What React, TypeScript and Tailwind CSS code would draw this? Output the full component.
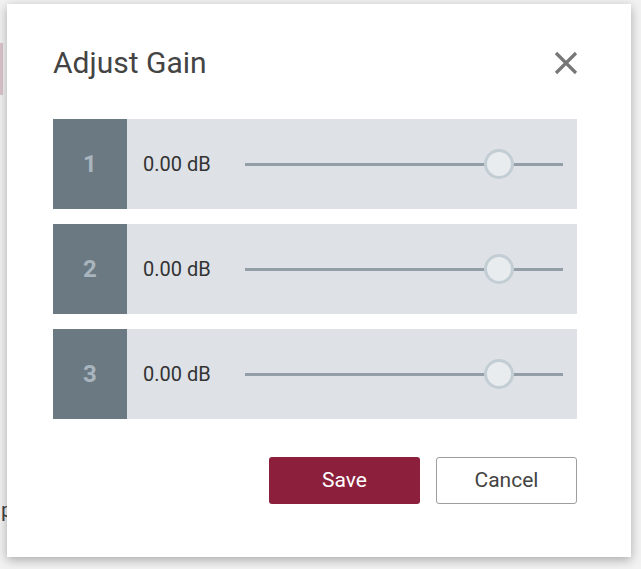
const channels = [
  { id: 1, gain: "0.00 dB", pos: 80 },
  { id: 2, gain: "0.00 dB", pos: 80 },
  { id: 3, gain: "0.00 dB", pos: 80 },
]

function GainSlider({ pos }: { pos: number }) {
  return (
    <div className="relative flex-1 h-[30px] flex items-center">
      <div className="w-full h-[3px] bg-[#949ea6]" />
      <div
        className="absolute top-0 w-[30px] h-[30px] -ml-[15px] rounded-full bg-[#e8ecef] border-[3px] border-[#c3cdd4]"
        style={{ left: `${pos}%` }}
      />
    </div>
  )
}

export default function App() {
  return (
    <div className="relative w-[641px] h-[569px] bg-[#f2f2f2] overflow-hidden font-['Roboto',sans-serif]">
      {/* page behind the modal */}
      <div className="pt-[43px]">
        <div className="w-[3px] h-[52px] bg-[#d9c4ca]" />
      </div>
      <div className="mt-[405px] pl-px text-[21px] leading-none text-[#444]">p</div>

      <div className="absolute left-[7px] top-[4px] w-[624px] h-[553px] bg-white shadow-[0_3px_10px_rgba(0,0,0,0.3)] pl-[46px] pr-[54px] pt-[44px]">
        <div className="flex items-start justify-between h-[30px]">
          <h2 className="text-[30px] text-[#444] leading-none">Adjust Gain</h2>
          <svg width="24" height="24" viewBox="0 0 24 24" className="mt-[3px] mr-[-1px]">
            <path d="M2 2 L22 22 M22 2 L2 22" stroke="#777" strokeWidth="3.2" strokeLinecap="butt" />
          </svg>
        </div>

        <div className="mt-[41px] flex flex-col gap-[15px]">
          {channels.map((c) => (
            <div key={c.id} className="flex h-[90px] bg-[#dee2e6]">
              <div className="w-[74px] bg-[#6b7983] flex items-center justify-center text-[24px] font-bold text-[#a9b5be]">
                {c.id}
              </div>
              <div className="flex-1 flex items-center pl-4 pr-[14px]">
                <span className="w-[102px] text-[20px] text-[#333]">{c.gain}</span>
                <GainSlider pos={c.pos} />
              </div>
            </div>
          ))}
        </div>

        <div className="mt-[38px] flex justify-end gap-4">
          <button className="w-[151px] h-[47px] rounded-[3px] bg-[#8b1f3c] text-white text-[21px]">Save</button>
          <button className="w-[141px] h-[47px] rounded-[3px] bg-white border border-[#9e9e9e] text-[#444] text-[21px]">Cancel</button>
        </div>
      </div>
    </div>
  )
}
